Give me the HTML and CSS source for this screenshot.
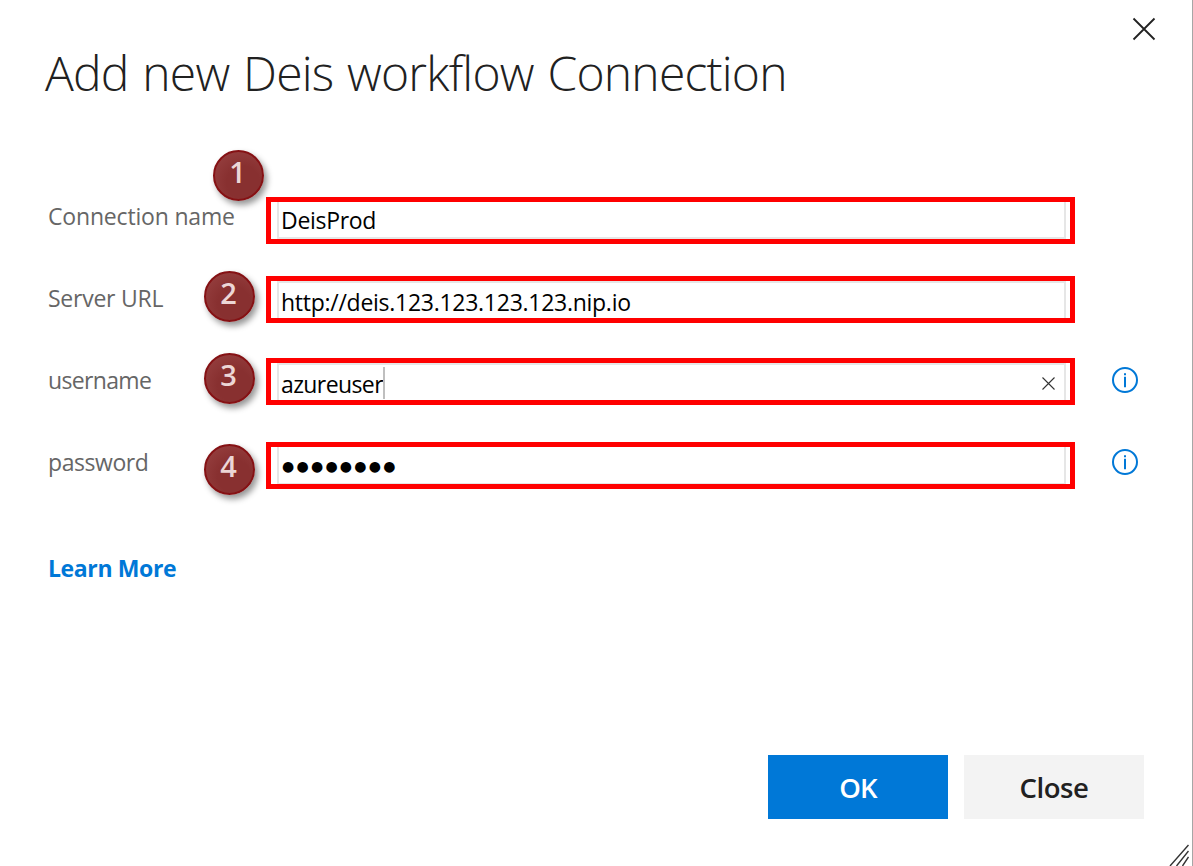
FILE: index.html
```
<!DOCTYPE html>
<html lang="en">
<head>
<meta charset="utf-8">
<title>Add new Deis workflow Connection</title>
<link rel="stylesheet" href="styles.css">
</head>
<body>
<main class="dialog">
  <svg class="close-icon" viewBox="0 0 24 24"><path d="M1.5 1.5 22.5 22.5M22.5 1.5 1.5 22.5"/></svg>
  <h1 class="title">Add new Deis workflow Connection</h1>
  <form class="form">
    <div class="row">
      <label class="label label-name">Connection name</label>
      <div class="field"><span class="value value-name">DeisProd</span><i class="highlight highlight-1"></i><b class="badge badge-1">1</b></div>
    </div>
    <div class="row">
      <label class="label label-url">Server URL</label>
      <div class="field"><span class="value value-url">http://deis.123.123.123.123.nip.io</span><i class="highlight"></i><b class="badge badge-2">2</b></div>
    </div>
    <div class="row">
      <label class="label label-user">username</label>
      <div class="field"><span class="value value-user">azureuser</span><i class="caret"></i>
        <svg class="clear" viewBox="0 0 13 13"><path d="M.5.5l12 12M12.5.5l-12 12"/></svg>
        <i class="highlight"></i><b class="badge badge-3">3</b></div>
      <svg class="info" viewBox="0 0 26 26"><circle cx="13" cy="13" r="12"/><path d="M13 9.8v10.4M13 6.2v2"/></svg>
    </div>
    <div class="row">
      <label class="label label-pass">password</label>
      <div class="field"><span class="value dots">●●●●●●●●</span><i class="highlight highlight-4"></i><b class="badge badge-4">4</b></div>
      <svg class="info" viewBox="0 0 26 26"><circle cx="13" cy="13" r="12"/><path d="M13 9.8v10.4M13 6.2v2"/></svg>
    </div>
  </form>
  <a class="learn">Learn More</a>
  <footer class="actions">
    <button class="btn btn-ok">OK</button>
    <button class="btn btn-close">Close</button>
  </footer>
  <svg class="grip" viewBox="0 0 20 22"><path d="M1 22 19.5 1M7.5 22 19.5 7M13.5 22 19.5 13"/></svg>
</main>
</body>
</html>
```
FILE: styles.css
```
* { box-sizing: border-box; }
body { margin: 0; background: #fff; font-family: "Open Sans", "Noto Sans", sans-serif; }
.dialog {
  position: relative;
  display: flex;
  flex-direction: column;
  height: 866px;
  padding: 40px 48px 47px 49px;
  border-right: 1px solid #a6a6a6;
  overflow: hidden;
}
.close-icon { position: absolute; top: 17px; right: 36px; width: 24px; height: 24px; }
.close-icon path { stroke: #212121; stroke-width: 1.8; }
.title {
  margin: 0 0 93px -4px;
  font-size: 48px;
  font-weight: 300;
  line-height: 66px;
  letter-spacing: -.78px;
  word-spacing: 2px;
  color: #212121;
  white-space: nowrap;
}
.form { display: flex; flex-direction: column; gap: 42px; }
.row { display: flex; height: 40px; }
.label {
  width: 228px;
  margin-left: -1px;
  padding-right: 1px;
  flex: none;
  font-size: 23px;
  line-height: 34px;
  color: #666;
}
.label + .field { margin-left: 1px; }
.label-name { letter-spacing: -.18px; }
.label-url { letter-spacing: -.25px; }
.label-user { letter-spacing: -.65px; }
.label-pass { letter-spacing: -.43px; }
.field {
  position: relative;
  display: flex;
  width: 789px;
  padding: 1px 9px 0 2px;
  border: 2px solid #e6e6e6;
  font-size: 23px;
  line-height: 36px;
  color: #000;
}
.value-name { letter-spacing: -.3px; }
.value-url { letter-spacing: -.27px; }
.value-user { letter-spacing: -.6px; }
.dots {
  margin-left: 1px;
  font-family: "DejaVu Sans", sans-serif;
  font-size: 14px;
  line-height: 37px;
  letter-spacing: 2.25px;
}
.caret { width: 2px; height: 32px; margin-top: 1px; background: #bfbfbf; }
.clear { width: 13px; height: 13px; margin: 11px 0 0 auto; }
.clear path { stroke: #333; stroke-width: 1.1; }
.highlight {
  position: absolute;
  left: -13px;
  top: -7px;
  width: 809px;
  height: 47px;
  border: 5px solid #f00;
}
.highlight-1 { top: -4px; }
.highlight-4 { top: -5px; }
.badge {
  position: absolute;
  left: -75px;
  width: 51px;
  height: 51px;
  padding-right: 2px;
  border: 2px solid #851114;
  border-radius: 50%;
  background: radial-gradient(circle at 60% 65%, #883030 40%, #923b3b 75%);
  box-shadow: 3px 4px 6px rgba(0, 0, 0, .42);
  font-size: 29px;
  font-weight: 600;
  line-height: 40px;
  text-align: center;
  color: #ecd6d6;
}
.badge-1 { left: -66px; top: -51px; }
.badge-2 { top: -12px; }
.badge-3 { top: -12px; }
.badge-4 { top: -3px; }
.info { width: 26px; height: 26px; margin: 4px 0 0 46px; }
.info circle, .info path { fill: none; stroke: #0078d7; stroke-width: 2; }
.learn {
  margin: 66px 0 0 -1px;
  font-size: 23px;
  font-weight: 700;
  line-height: 34px;
  letter-spacing: -.37px;
  color: #0078d7;
}
.actions { display: flex; justify-content: flex-end; gap: 16px; margin-top: auto; }
.btn {
  width: 180px;
  height: 64px;
  padding: 2px 0 0;
  border: 0;
  font: 600 27.5px/62px "Open Sans", "Noto Sans", sans-serif;
}
.btn-ok { background: #0078d7; color: #fff; letter-spacing: -.8px; }
.btn-close { background: #f3f3f3; color: #212121; letter-spacing: -.4px; }
.grip { position: absolute; right: 3px; bottom: 0; width: 20px; height: 22px; }
.grip path { stroke: #333; stroke-width: 1.4; }
```
